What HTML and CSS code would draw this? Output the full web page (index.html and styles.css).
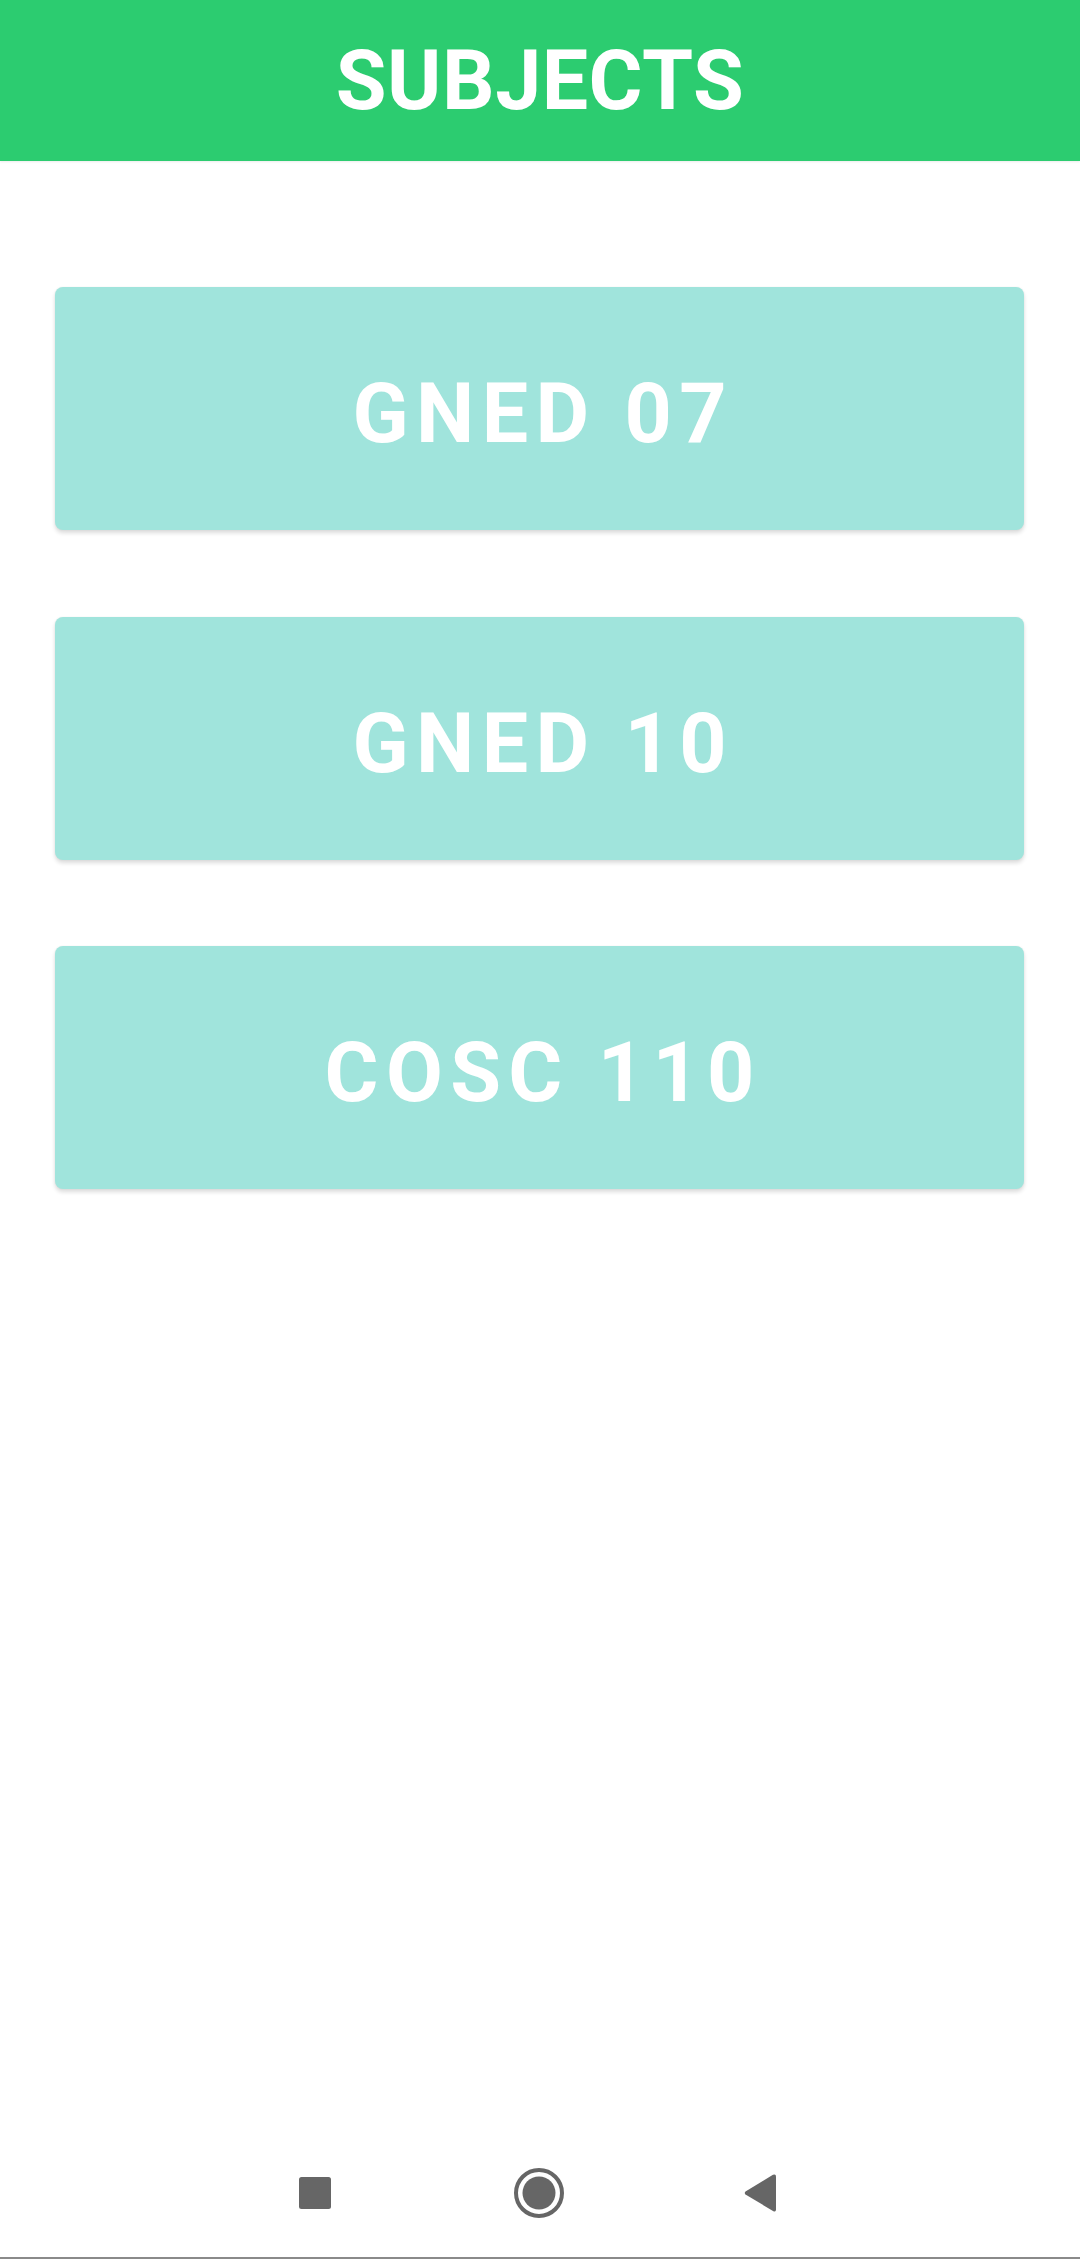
FILE: index.html
```html
<!DOCTYPE html>
<html lang="en">
<head>
<meta charset="utf-8">
<title>Subjects</title>
<link rel="stylesheet" href="styles.css">
</head>
<body>
<div class="screen">
  <header class="appbar">
    <h1 class="appbar-title">SUBJECTS</h1>
  </header>
  <main class="list">
    <button class="subject">GNED 07</button>
    <button class="subject">GNED 10</button>
    <button class="subject">COSC 110</button>
  </main>
  <nav class="navbar">
    <svg class="nav-icon" width="32" height="32" viewBox="0 0 32 32"><rect x="0" y="0" width="32" height="32" rx="2.5" fill="#666666"/></svg>
    <svg class="nav-icon" width="52" height="52" viewBox="0 0 52 52"><circle cx="26" cy="26" r="23" fill="none" stroke="#666666" stroke-width="4"/><circle cx="26" cy="26" r="16.5" fill="#666666"/></svg>
    <svg class="nav-icon" width="32" height="38" viewBox="0 0 32 38"><path d="M29 0.8 Q32 -0.5 32 2.5 L32 35.5 Q32 38.5 29 37 L1.5 20.5 Q0 19 1.5 17.5 Z" fill="#666666"/></svg>
  </nav>
</div>
</body>
</html>
```
FILE: styles.css
```css
html, body {
  margin: 0;
  padding: 0;
  background: #ffffff;
}

.screen {
  width: 1080px;
  height: 2259px;
  display: flex;
  flex-direction: column;
  font-family: Roboto, "Liberation Sans", sans-serif;
}

.appbar {
  height: 161px;
  flex: 0 0 161px;
  background: #2ccc70;
  display: flex;
  align-items: center;
  justify-content: center;
  box-shadow: 0 1px 2px rgba(0, 0, 0, 0.08);
  position: relative;
  z-index: 1;
}

.appbar-title {
  margin: 0;
  padding-top: 2px;
  color: #ffffff;
  font-size: 82.5px;
  font-weight: 700;
  line-height: 1;
  letter-spacing: 0.5px;
}

.list {
  flex: 1 1 auto;
  display: flex;
  flex-direction: column;
  gap: 86.5px;
  padding: 126px 56px 0 55px;
}

.subject {
  height: 243px;
  border: none;
  border-radius: 8px;
  background: #a0e4dc;
  color: #ffffff;
  font-family: Roboto, "Liberation Sans", sans-serif;
  font-size: 82.5px;
  font-weight: 700;
  letter-spacing: 7.4px;
  padding: 12px 0 0 7.4px;
  line-height: 1;
  box-shadow: 0 3px 4px rgba(0, 0, 0, 0.14), 0 0 2px rgba(0, 0, 0, 0.06);
  display: flex;
  align-items: center;
  justify-content: center;
}

.navbar {
  flex: 0 0 131px;
  height: 131px;
  display: flex;
  align-items: center;
  justify-content: center;
  padding-right: 6px;
  border-bottom: 2px solid #8a8a8a;
  box-sizing: border-box;
}

.nav-icon {
  display: block;
}

.nav-icon:nth-child(1) {
  margin-right: 182px;
}

.nav-icon:nth-child(2) {
  margin-right: 179px;
}
```
